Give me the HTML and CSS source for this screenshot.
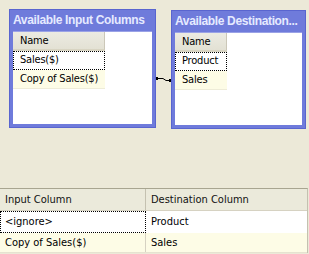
FILE: index.html
```
<!DOCTYPE html>
<html lang="en">
<head>
    <meta charset="UTF-8">
    <title>Column Mappings</title>
    <link rel="stylesheet" href="styles.css">
</head>
<body>
    <div class="designer">
        <div class="panel panel-input">
            <div class="panel-title">Available Input Columns</div>
            <div class="panel-body">
                <div class="cols cols-input">
                    <div class="cell head">Name</div>
                    <div class="cell focus">Sales($)</div>
                    <div class="cell alt">Copy of Sales($)</div>
                </div>
            </div>
        </div>

        <div class="link">
            <svg width="15" height="119" viewBox="0 0 15 119">
                <path d="M0 69.5H7L10 71.5H15" fill="none" stroke="#000" stroke-width="1"/>
                <rect x="0" y="68" width="2" height="3" fill="#000"/>
                <rect x="13" y="70" width="2" height="3" fill="#000"/>
            </svg>
        </div>

        <div class="panel panel-dest">
            <div class="panel-title">Available Destination...</div>
            <div class="panel-body">
                <div class="cols cols-dest">
                    <div class="cell head">Name</div>
                    <div class="cell focus">Product</div>
                    <div class="cell alt">Sales</div>
                </div>
            </div>
        </div>
    </div>

    <div class="grid">
        <div class="grid-row grid-head">
            <div class="gcell">Input Column</div>
            <div class="gcell">Destination Column</div>
        </div>
        <div class="grid-row">
            <div class="gcell focus">&lt;ignore&gt;</div>
            <div class="gcell">Product</div>
        </div>
        <div class="grid-row alt">
            <div class="gcell">Copy of Sales($)</div>
            <div class="gcell">Sales</div>
        </div>
    </div>
</body>
</html>
```

FILE: styles.css
```
body {
    margin: 0;
    padding: 0;
    width: 309px;
    height: 254px;
    overflow: hidden;
    background: #ece9d8;
    font-family: "DejaVu Sans Condensed", "DejaVu Sans", sans-serif;
    font-size: 11px;
    color: #000;
}
.designer {
    height: 188px;
    display: flex;
    align-items: flex-start;
    padding: 9px 0 0 9px;
    box-sizing: border-box;
}
.panel {
    height: 119px;
    box-sizing: border-box;
    background: #6f7bdb;
    border: 1px solid #5965cf;
    padding: 0 3px 3px;
    display: flex;
    flex-direction: column;
}
.panel-input {
    width: 147px;
}
.panel-dest {
    width: 135px;
    margin-top: 1px;
}
.panel-title {
    height: 21px;
    line-height: 21px;
    color: #e6eaff;
    font-family: "Liberation Sans", Arial, sans-serif;
    font-weight: bold;
    font-size: 12px;
    letter-spacing: -0.35px;
    white-space: nowrap;
}
.panel-body {
    flex: 1;
    background: #fff;
    border-top: 1px solid #9aa2e6;
}
.cols {
    display: flex;
    flex-direction: column;
}
.cols-input {
    width: 92px;
}
.cols-dest {
    width: 52px;
}
.cell {
    height: 19px;
    line-height: 18px;
    padding-left: 7px;
    box-sizing: border-box;
    white-space: nowrap;
    letter-spacing: -0.2px;
}
.cell.head {
    background: linear-gradient(#ecebe2, #e3e1d4);
    border-bottom: 2px solid #d8d4c2;
    border-right: 1px solid #cbc7b8;
}
.cell.focus {
    border: 1px dotted #000;
    padding-left: 6px;
    line-height: 16px;
}
.cell.alt {
    background: #fdfce6;
    border-bottom: 1px solid #eeecd8;
}
.link {
    width: 15px;
    height: 119px;
}
.link svg {
    display: block;
}
.grid {
    width: 307px;
    border-top: 1px solid #a8a590;
    border-right: 1px solid #c4c1b0;
}
.grid-row {
    display: grid;
    grid-template-columns: 146px 1fr;
    height: 22px;
    background: #fff;
}
.grid-head {
    height: 21px;
    background: #ebeadb;
    border-bottom: 1px solid #d6d2c2;
}
.grid-row.alt {
    background: #fdfce6;
    height: 19px;
    border-bottom: 1px solid #e6e3d0;
}
.gcell {
    padding-left: 5px;
    line-height: 21px;
    white-space: nowrap;
    border-right: 1px solid #d6d2c2;
    box-sizing: border-box;
}
.gcell:last-child {
    border-right: none;
}
.grid-head .gcell {
    border-right: 1px solid #c4c1b0;
    color: #111;
}
.grid-head .gcell:last-child {
    border-right: none;
}
.gcell.focus {
    border: 1px dotted #000;
    padding-left: 4px;
    line-height: 20px;
}
.grid-row.alt .gcell {
    line-height: 19px;
}
```
